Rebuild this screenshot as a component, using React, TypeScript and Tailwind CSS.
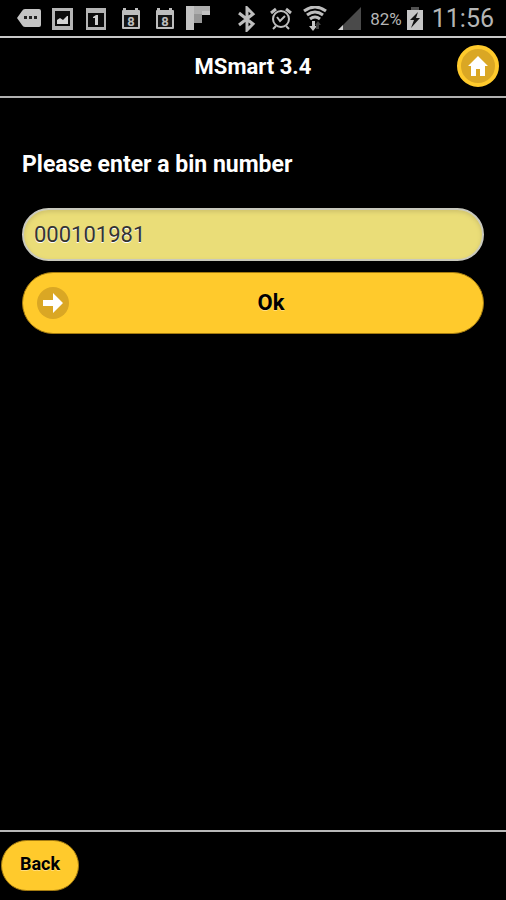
import { useState } from "react";
import type { ReactNode } from "react";

function StatusIcon({ label, children }: { label: string; children: ReactNode }) {
  return (
    <svg role="img" aria-label={label} viewBox="0 0 26 26" className="h-[26px] w-[26px] shrink-0" fill="none">
      {children}
    </svg>
  );
}

function CalendarIcon() {
  return (
    <StatusIcon label="Calendar">
      <path d="M5 2h3v2h9V2h3v2h1q1 0 1 1v17q0 1-1 1H5q-1 0-1-1V5q0-1 1-1z" fill="#bdbdbd" />
      <path d="M6 9h14v12H6z" fill="#151515" />
      <text x="13" y="20" textAnchor="middle" fontSize="13" fontWeight="700" fill="#bdbdbd" className="font-[Roboto,sans-serif]">8</text>
    </StatusIcon>
  );
}

function StatusBar() {
  return (
    <div className="flex h-9 items-center justify-between pt-[2px] pr-3 pl-4 font-[Roboto,'Liberation_Sans',sans-serif] text-[#b5b5b5]">
      <div className="flex gap-2">
        <StatusIcon label="Messages">
          <path d="M9 3h14q2 0 2 2v14q0 2-2 2H9q-2 0-3-2L1 12l5-7q1-2 3-2z" fill="#c4c4c4" />
          <path d="M8 10h3v3H8zM13 10h3v3h-3zM18 10h3v3h-3z" fill="#222" />
        </StatusIcon>
        <StatusIcon label="Picture">
          <path d="M2 2h21v22H2z" fill="#b5b5b5" />
          <path d="M5 5h15v15H5z" fill="#0c0c0c" />
          <path d="M7 18v-4l3-2 3 2 4-4h1v8z" fill="#d6d6d6" />
        </StatusIcon>
        <StatusIcon label="Date">
          <path d="M2 2h20v22H2z" fill="#b5b5b5" />
          <path d="M4 7h16v14H4z" fill="#0c0c0c" />
          <path d="M9 11l3-2h2v10h-3v-7H9z" fill="#d0d0d0" />
        </StatusIcon>
        <CalendarIcon />
        <CalendarIcon />
        <StatusIcon label="Flipboard">
          <path d="M0 0h24v9H8v15H0z" fill="#c2c2c2" />
          <path d="M8 8h8v9H8z" fill="#969696" />
          <path d="M8 8h8V5h8V0H8z" fill="#aeaeae" />
        </StatusIcon>
      </div>
      <div className="flex items-center">
        <div className="flex gap-2">
          <StatusIcon label="Bluetooth">
            <path d="M5 7l14 11-6 6V2l6 6L5 19" stroke="#bebebe" strokeWidth="3" />
          </StatusIcon>
          <StatusIcon label="Alarm">
            <circle cx="13" cy="13" r="8" stroke="#bebebe" strokeWidth="2" />
            <path d="M3 7l5-4M18 3l5 4" stroke="#bebebe" strokeWidth="3" />
            <path d="M8 20l-3 3M18 20l3 3M9 11l3 4 5-5" stroke="#bebebe" strokeWidth="2" />
          </StatusIcon>
          <StatusIcon label="Wireless">
            <path d="M2 5q11-8 22 0M5 9q8-6 16 0M8 13q5-4 10 0" stroke="#bebebe" strokeWidth="3" />
            <path d="M10 15h3v5h2l-4 5-4-5h3z" fill="#c6c6c6" />
            <path d="M16 15l3 4h-2v4h-3v-4h-1z" fill="#404040" />
          </StatusIcon>
          <StatusIcon label="Signal">
            <path d="M25 1v23H2z" fill="#4a4a4a" />
            <path d="M7 19v5H2z" fill="#d0d0d0" />
          </StatusIcon>
        </div>
        <span className="ml-2 text-[17px] leading-5">82%</span>
        <svg role="img" aria-label="Charging" viewBox="0 0 18 24" className="ml-1 h-6 w-[18px]">
          <path d="M5 0h8v4H5z" fill="#505050" />
          <path d="M1 3h16v20H1z" fill="#c5c5c5" />
          <path d="M12 5l-8 8h4l-3 8 9-10h-4z" fill="#111" />
        </svg>
        <span className="ml-2 text-[25px] leading-7">11:56</span>
      </div>
    </div>
  );
}

export default function App() {
  const [bin, setBin] = useState("000101981");
  return (
    <div className="flex min-h-screen flex-col bg-black font-[Roboto,'Liberation_Sans',sans-serif] text-white">
      <StatusBar />
      <header className="grid h-[62px] grid-cols-[1fr_auto_1fr] items-center border-t-2 border-b-2 border-t-[#c8c8c8] border-b-[#b0b0b0] px-[7px]">
        <h1 className="col-start-2 text-[22px] leading-7 font-bold">MSmart 3.4</h1>
        <button
          type="button"
          aria-label="Home"
          className="mt-[7px] flex h-[42px] w-[42px] items-center justify-center self-start justify-self-end rounded-full border-4 border-[#ffca2c] bg-[#daa724]"
        >
          <svg viewBox="0 0 20 20" className="h-5 w-5 shrink-0" fill="white" aria-hidden="true">
            <path d="M10 0l10 10h-3v10h-5v-7H8v7H3V10H0z" />
          </svg>
        </button>
      </header>
      <main className="flex-1 px-[22px] pt-[53px]">
        <form onSubmit={(event) => event.preventDefault()}>
          <label htmlFor="bin-number" className="block text-[23px] leading-7 font-bold">
            Please enter a bin number
          </label>
          <input
            id="bin-number"
            type="text"
            inputMode="numeric"
            value={bin}
            onChange={(event) => setBin(event.target.value)}
            className="mt-[29px] block h-[53px] w-full rounded-full border-2 border-[#c9c9bd] bg-[#eadd78] px-[10px] text-[22px] text-[#333] shadow-[inset_0_2px_4px_#cfc26c] outline-none [text-shadow:0_1px_0_#fff]"
          />
          <button
            type="submit"
            className="mt-[11px] grid h-[62px] w-full grid-cols-[32px_1fr_32px] items-center rounded-full border border-[#a47b10] bg-[#ffca2c] px-[14px] text-[22px] font-bold text-black [text-shadow:0_1px_0_#fff6]"
          >
            <svg viewBox="0 0 32 32" className="h-8 w-8" aria-hidden="true">
              <circle cx="16" cy="16" r="16" fill="#daa724" />
              <path d="M6 13h10V6l10 10-10 10v-7H6z" fill="white" />
            </svg>
            <span className="pb-[2px] pl-9">Ok</span>
          </button>
        </form>
      </main>
      <footer className="h-[70px] border-t-2 border-[#b8b8b8] px-px pt-2">
        <button
          type="button"
          className="h-[51px] rounded-full border border-[#a47b10] bg-[#ffca2c] px-[18px] pb-1 text-lg font-bold text-black [text-shadow:0_1px_0_#fff6]"
        >
          Back
        </button>
      </footer>
    </div>
  );
}
